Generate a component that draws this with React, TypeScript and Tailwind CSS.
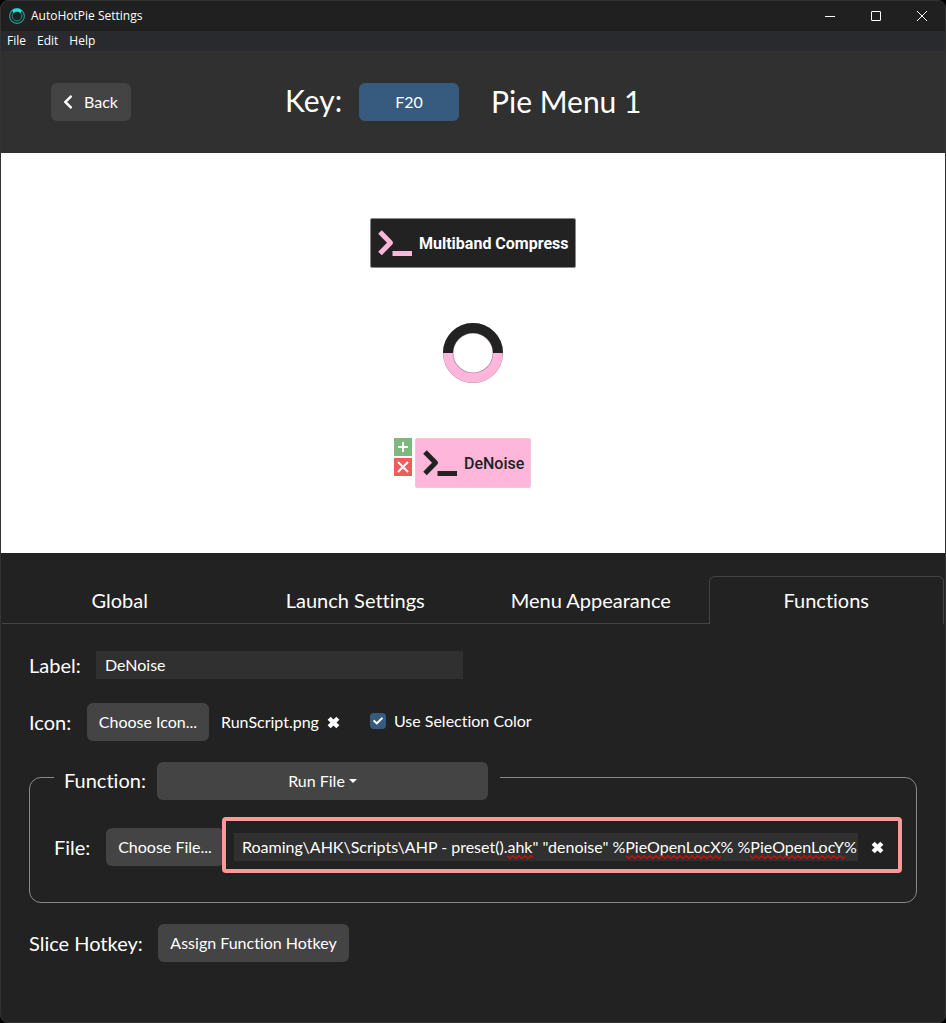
import React from "react";
import { FaCheck, FaChevronLeft } from "react-icons/fa";

const buttonBase = "h-[38px] shrink-0 rounded-md bg-[#444444] text-[16px] text-white hover:bg-[#505050]";

function Logo() {
  return (
    <svg width="16" height="16" viewBox="0 0 16 16" fill="none" aria-hidden="true">
      <circle cx="8" cy="8" r="7.4" stroke="#1fa39f" strokeWidth="1.1" />
      <circle cx="8" cy="8" r="4.9" stroke="#1c8f8c" strokeWidth="1" />
      <path d="M3 2.6A7.2 7.2 0 0 1 13 2.6L11.4 5A4.6 4.6 0 0 0 4.6 5Z" fill="#22e0d4" />
    </svg>
  );
}

function RemoveIcon() {
  return (
    <svg width="13" height="13" viewBox="0 0 12 12" aria-hidden="true">
      <path d="M2 2L10 10M10 2L2 10" stroke="#fff" strokeWidth="4" />
    </svg>
  );
}

function PromptIcon({ color }: { color: string }) {
  return (
    <svg width="34" height="26" viewBox="0 0 34 26" fill="none" stroke={color} aria-hidden="true">
      <path d="M2 2L12.5 12.7L2 23.4" strokeWidth="5" strokeLinejoin="round" />
      <path d="M14.5 23.5H34" strokeWidth="5" />
    </svg>
  );
}

function Squiggle({ className }: { className: string }) {
  return (
    <svg className={"pointer-events-none absolute top-[22px] h-1 " + className} aria-hidden="true">
      <defs>
        <pattern id="wave" width="6" height="4" patternUnits="userSpaceOnUse">
          <path d="M-1 -0.3L3 3.6L7 -0.3" fill="none" stroke="#e00808" strokeWidth="1.2" />
        </pattern>
      </defs>
      <rect width="100%" height="4" fill="url(#wave)" />
    </svg>
  );
}

function TitleBar() {
  return (
    <div className="flex h-[30px] items-center bg-[#202020] pl-2 font-['Open_Sans',sans-serif]">
      <Logo />
      <h1 className="ml-1.5 flex-1 text-[12px]">AutoHotPie Settings</h1>
      <button aria-label="Minimize" className="flex h-[30px] w-[46px] items-center justify-center">
        <svg width="10" height="10" stroke="#fff"><path d="M0 5.5H10" /></svg>
      </button>
      <button aria-label="Maximize" className="flex h-[30px] w-[46px] items-center justify-center">
        <svg width="10" height="10" fill="none" stroke="#fff"><rect x="0.5" y="0.5" width="9" height="9" rx="0.5" /></svg>
      </button>
      <button aria-label="Close" className="flex h-[30px] w-[46px] items-center justify-center">
        <svg width="10" height="10" stroke="#fff"><path d="M0 0L10 10M10 0L0 10" /></svg>
      </button>
    </div>
  );
}

function MenuBar() {
  return (
    <nav className="flex h-5 items-center gap-[11px] bg-[#292a2d] pl-1.5 font-['Open_Sans',sans-serif] text-[12px]">
      <button>File</button>
      <button>Edit</button>
      <button>Help</button>
    </nav>
  );
}

function Header() {
  return (
    <header className="flex h-[102px] items-center bg-[#303030] pl-[50px]">
      <button className={buttonBase + " flex w-20 items-center gap-2 pl-[9px]"}>
        <FaChevronLeft size={16} aria-hidden="true" />
        Back
      </button>
      <span className="ml-[154px] w-[74px] pb-1 text-[30px]">Key:</span>
      <button className="h-[38px] w-[100px] rounded-md bg-[#375a7f] text-[16px]">F20</button>
      <h2 className="ml-8 pb-0.5 text-[30px]">Pie Menu 1</h2>
    </header>
  );
}

function PieCanvas() {
  return (
    <section aria-label="Pie menu preview" className="relative h-[400px] bg-white font-[Roboto,sans-serif]">
      <div className="absolute top-[65px] left-1/2 flex h-[50px] w-[206px] -translate-x-1/2 items-center gap-[7px] rounded-xs border border-[#888888] bg-[#222222] pl-[7px] text-[16px] font-bold whitespace-nowrap">
        <PromptIcon color="#ffb6db" />
        <span className="pt-0.5">Multiband Compress</span>
      </div>
      <svg width="60" height="60" viewBox="0 0 60 60" fill="none" className="absolute top-[170px] left-1/2 -translate-x-1/2" role="img" aria-label="Pie ring">
        <circle cx="30" cy="30" r="24.8" stroke="#a8839a" strokeWidth="10.4" />
        <path d="M5 30A25 25 0 0 0 55 30" stroke="#ffb6db" strokeWidth="9.4" />
        <path d="M5 30A25 25 0 0 1 55 30" stroke="#222222" strokeWidth="10" />
      </svg>
      <div className="absolute top-[285px] left-1/2 flex h-[50px] w-[116px] -translate-x-1/2 items-center gap-[7px] rounded-xs border border-[#f3c6dd] bg-[#ffb6db] pl-[7px] text-[16px] font-medium text-[#222222]">
        <PromptIcon color="#222222" />
        <span className="pt-0.5">DeNoise</span>
        <div className="absolute -top-px -left-[22px] flex flex-col gap-0.5">
          <button aria-label="Add slice" className="flex h-[18px] w-[18px] items-center justify-center bg-[#7fb77e]">
            <svg width="12" height="12" stroke="#fff" strokeWidth="2"><path d="M6 1V11M1 6H11" /></svg>
          </button>
          <button aria-label="Delete slice" className="flex h-[18px] w-[18px] items-center justify-center bg-[#f15b5b]">
            <svg width="12" height="12" stroke="#fff" strokeWidth="2"><path d="M1 1L11 11M11 1L1 11" /></svg>
          </button>
        </div>
      </div>
    </section>
  );
}

function Tabs() {
  const idle = "h-12 border-b border-[#444444]";
  return (
    <div role="tablist" className="mt-[23px] grid grid-cols-4 px-px text-[20px]">
      <button role="tab" aria-selected="false" className={idle}>Global</button>
      <button role="tab" aria-selected="false" className={idle}>Launch Settings</button>
      <button role="tab" aria-selected="false" className={idle}>Menu Appearance</button>
      <button role="tab" aria-selected="true" className="h-12 rounded-t-md border border-b-0 border-[#444444] pb-0.5">
        Functions
      </button>
    </div>
  );
}

function FunctionsPanel() {
  return (
    <div role="tabpanel" aria-label="Functions" className="flex flex-col px-7">
      <div className="mt-[27px] flex items-center">
        <label htmlFor="slice-label" className="w-[67px] text-[20px] leading-7">Label:</label>
        <input id="slice-label" defaultValue="DeNoise" className="h-7 w-[367px] bg-[#303030] px-[9px] pb-0.5 text-[16px] outline-none" />
      </div>

      <div className="mt-6 flex items-center">
        <span className="w-[58px] text-[20px]">Icon:</span>
        <button className={buttonBase + " w-[122px]"}>Choose Icon...</button>
        <span className="ml-3 text-[16px]">RunScript.png</span>
        <button aria-label="Clear icon" className="ml-2"><RemoveIcon /></button>
        <label className="ml-[30px] flex items-center gap-2 pb-0.5 text-[16px]">
          <span className="relative flex h-4 w-4">
            <input type="checkbox" defaultChecked className="peer h-4 w-4 appearance-none rounded bg-[#444444] checked:bg-[#375a7f]" />
            <FaCheck size={10} className="pointer-events-none absolute top-[3px] left-[3px] hidden peer-checked:block" aria-hidden="true" />
          </span>
          Use Selection Color
        </label>
      </div>

      <fieldset className="mt-[21px] rounded-xl border border-[#888888] pl-6">
        <legend className="flex h-[30px] items-start pr-3 pl-2.5">
          <span className="w-[93px] text-[20px] leading-9">Function:</span>
          <button className={buttonBase + " flex w-[331px] items-center justify-center gap-1"}>
            Run File
            <span className="border-x-4 border-t-4 border-x-transparent border-t-white" />
          </button>
        </legend>
        <div className="mt-[25px] mb-[29px] flex items-center pr-3.5">
          <label htmlFor="file-args" className="w-[52px] shrink-0 pt-1 text-[20px]">File:</label>
          <button className={buttonBase + " mt-1 w-[118px]"}>Choose File...</button>
          <div className="relative -ml-0.5 flex h-14 flex-1 items-center rounded border-4 border-[#ff9999] bg-[#222222] pt-1 pr-3.5 pl-2">
            <div className="relative flex flex-1">
              <input
                id="file-args"
                spellCheck={false}
                defaultValue={'Roaming\\AHK\\Scripts\\AHP - preset().ahk" "denoise" %PieOpenLocX% %PieOpenLocY%'}
                className="h-7 w-full bg-[#303030] pb-0.5 pl-2 text-[16px] outline-none"
              />
              <Squiggle className="left-[273px] w-[26px]" />
              <Squiggle className="left-[392px] w-[95px]" />
              <Squiggle className="left-[516px] w-[95px]" />
            </div>
            <button aria-label="Clear file" className="ml-[13px]"><RemoveIcon /></button>
          </div>
        </div>
      </fieldset>

      <div className="mt-[21px] flex items-center">
        <span className="w-[129px] text-[20px]">Slice Hotkey:</span>
        <button className={buttonBase + " w-[191px]"}>Assign Function Hotkey</button>
      </div>
    </div>
  );
}

export default function App() {
  return (
    <div className="flex min-h-screen flex-col bg-black">
      <main className="flex-1 overflow-hidden rounded-lg border border-[#333333] bg-[#222222] font-[Lato,sans-serif] text-white [font-variant-ligatures:none]">
        <TitleBar />
        <MenuBar />
        <Header />
        <PieCanvas />
        <Tabs />
        <FunctionsPanel />
      </main>
    </div>
  );
}
